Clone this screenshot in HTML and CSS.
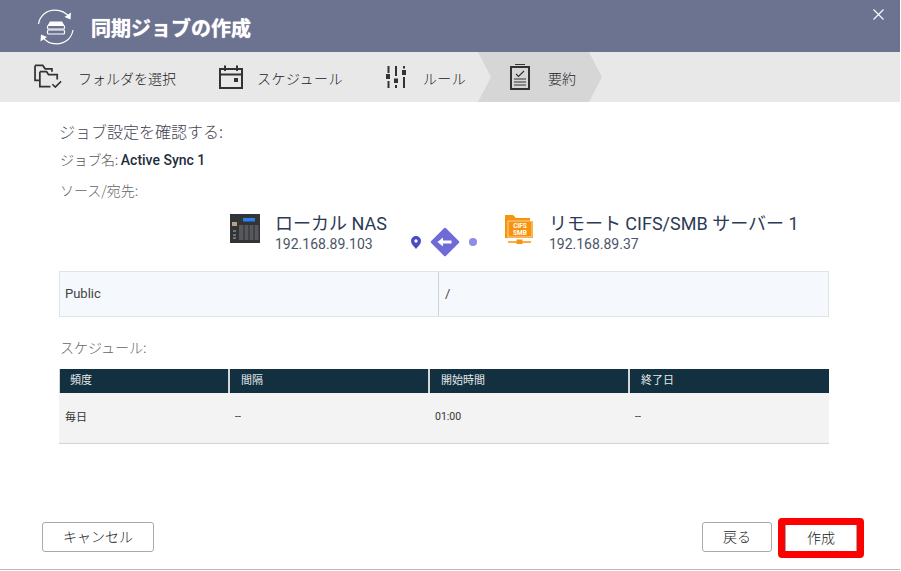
FILE: index.html
```html
<!DOCTYPE html>
<html lang="ja">
<head>
<meta charset="utf-8">
<title>同期ジョブの作成</title>
<link rel="stylesheet" href="styles.css">
</head>
<body>
<div class="dialog">
  <header class="head">
    <svg class="head-icon" width="40" height="40" viewBox="0 0 40 40" fill="none" stroke="#fff">
      <path d="M2.500 17C4 8 11 3.200 19 3.200c6 0 11 2.600 14 7" stroke-width="1.200"/>
      <path d="M37 23c-1.500 9-8.500 13.800-16.500 13.800-6 0-11-2.600-14-7" stroke-width="1.200"/>
      <path d="M35 5.500l-.5 7-6-2.500z" fill="#fff" stroke="none"/>
      <path d="M4.500 34.500l.5-7 6 2.500z" fill="#fff" stroke="none"/>
      <path d="M14 14.500h12l2.500 4h-17z" fill="#fff" stroke="none"/>
      <rect x="11.500" y="18.500" width="17" height="3.500" rx="1" fill="#6b7390" stroke-width="1.200"/>
      <rect x="11.500" y="23" width="17" height="4" rx="1" fill="#6b7390" stroke-width="1.200"/>
    </svg>
    <h1 class="head-title">同期ジョブの作成</h1>
    <svg class="head-close" width="11" height="11" viewBox="0 0 11 11" stroke="#fff" stroke-width="1.100"><path d="M.5.5l10 10M10.500.5l-10 10"/></svg>
  </header>

  <nav class="steps">
    <div class="step step-first">
      <svg width="31" height="27" viewBox="0 0 32 28" fill="none" stroke="#333" stroke-width="1.800">
        <path d="M1 1.500h8l2.500 3.500h7v3M1 1.500V17h5"/>
        <path d="M6 8h7l2 3h9v5M6 8v15.500h11"/>
        <path d="M19 21l3 3 6-6" stroke-width="1.600"/>
      </svg>
      <span>フォルダを選択</span>
    </div>
    <div class="step step-sched">
      <svg width="24" height="24" viewBox="0 0 24 24" fill="none" stroke="#333" stroke-width="2">
        <path d="M1 4h22v19H1zM1 9.500h22M6 .5V6M18 .5V6"/>
        <rect x="15" y="13" width="4" height="4" fill="#333" stroke="none"/>
      </svg>
      <span>スケジュール</span>
    </div>
    <div class="step step-rule">
      <svg width="20" height="22" viewBox="0 0 20 22" fill="#333">
        <rect x="1.500" y="0" width="2" height="7"/><rect x="0" y="8" width="4" height="5"/><rect x="1.500" y="15" width="2" height="7"/>
        <rect x="9" y="0" width="2" height="10"/><rect x="8" y="12.500" width="4" height="4.500"/><rect x="9" y="19" width="2" height="3"/>
        <rect x="17" y="0" width="2" height="2.500"/><rect x="16" y="4" width="4" height="5"/><rect x="17" y="11" width="2" height="11"/>
      </svg>
      <span>ルール</span>
    </div>
    <div class="step step-active">
      <svg width="20" height="26" viewBox="0 0 20 26" fill="none" stroke="#333">
        <path d="M5 .5h10" stroke-width="1"/>
        <rect x="1" y="3" width="18" height="22" stroke-width="2"/>
        <path d="M6 10l2.500 2.500L14 7" stroke-width="1.200"/>
        <path d="M4 15h12M4 18h12M4 21h12" stroke-width="1"/>
      </svg>
      <span>要約</span>
    </div>
  </nav>

  <main class="body">
    <h2 class="confirm">ジョブ設定を確認する:</h2>
    <p class="job">ジョブ名: <b>Active Sync 1</b></p>
    <p class="label label-source">ソース/宛先:</p>

    <div class="route">
      <div class="end end-local">
        <svg width="30" height="30" viewBox="0 0 30 30">
          <rect width="30" height="29" fill="#333438"/>
          <rect x="13" y="4" width="12" height="3.500" fill="#2f80ed"/>
          <rect x="2" y="8" width="5" height="4" fill="#b9a283"/>
          <rect x="9" y="11" width="19.500" height="15" fill="#57585c"/>
          <path d="M14 11v15M19 11v15M24 11v15" stroke="#2b2c30"/>
          <path d="M3 17h3M3 21h3M3 24h3" stroke="#888" stroke-width="1.500"/>
        </svg>
        <div class="end-text"><div class="end-name">ローカル NAS</div><div class="end-ip">192.168.89.103</div></div>
      </div>
      <div class="link">
        <svg width="10" height="13" viewBox="0 0 10 13"><path fill-rule="evenodd" d="M5 0a5 5 0 0 1 5 5c0 3-3 5.500-5 8-2-2.500-5-5-5-8a5 5 0 0 1 5-5zm0 3.300a1.700 1.700 0 1 0 0 3.400 1.700 1.700 0 0 0 0-3.400z" fill="#4a4bc0"/></svg>
        <svg width="30" height="30" viewBox="0 0 30 30"><rect x="4.500" y="4.500" width="21" height="21" rx="1.500" transform="rotate(45 15 15)" fill="#6e6bd6"/><path d="M7.500 15l5.500-4.500v3h8.500v3H13v3z" fill="#fff"/></svg>
        <svg width="8" height="8" viewBox="0 0 8 8"><circle cx="4" cy="4" r="4" fill="#8f8ce6"/></svg>
      </div>
      <div class="end end-remote">
        <svg width="29" height="30" viewBox="0 0 29 30">
          <path d="M0 1h8l3 3h14v3h3v17H0z" fill="#f7930e"/>
          <rect x="3" y="7" width="24" height="16" fill="#f7930e" stroke="#fff" stroke-width=".6"/>
          <text x="15" y="13.500" class="cifs">CIFS</text>
          <text x="15" y="20.500" class="cifs">SMB</text>
          <path d="M3 28h23" stroke="#f7930e" stroke-width="1.500"/>
          <rect x="11.500" y="25.500" width="6" height="4.500" fill="#f7930e"/>
        </svg>
        <div class="end-text"><div class="end-name">リモート CIFS/SMB サーバー 1</div><div class="end-ip">192.168.89.37</div></div>
      </div>
    </div>

    <div class="paths">
      <div class="path-cell path-left">Public</div>
      <div class="path-cell path-right">/</div>
    </div>

    <p class="label label-schedule">スケジュール:</p>

    <table class="sched">
      <thead>
        <tr><th>頻度</th><th>間隔</th><th>開始時間</th><th>終了日</th></tr>
      </thead>
      <tbody>
        <tr><td>毎日</td><td>--</td><td>01:00</td><td>--</td></tr>
      </tbody>
    </table>
  </main>

  <footer class="foot">
    <button class="btn btn-cancel">キャンセル</button>
    <div class="foot-right">
      <button class="btn btn-back">戻る</button>
      <div class="mark"><button class="btn btn-create">作成</button></div>
    </div>
  </footer>
</div>
</body>
</html>
```

FILE: styles.css
```css
* { box-sizing: border-box; }
html, body { margin: 0; padding: 0; background: #fff; }
body {
  width: 901px;
  height: 571px;
  overflow: hidden;
  font-family: Roboto, "Noto Sans CJK JP", sans-serif;
  color: #333;
}
.dialog {
  width: 900px;
  height: 570px;
  display: flex;
  flex-direction: column;
  border-bottom: 1px solid #b9b9b9;
}
.head {
  height: 52px;
  flex: none;
  background: #6b7390;
  display: flex;
  align-items: center;
  padding-left: 36px;
  position: relative;
}
.head-icon { margin-top: 2px; }
.head-title {
  margin: 2px 0 0 15px;
  font: 700 20px "Noto Sans CJK JP", sans-serif;
  color: #fff;
  text-shadow: 0 0 1px #fff;
}
.head-close { position: absolute; left: 873px; top: 9px; }

.steps {
  height: 50px;
  flex: none;
  background: #e8e8e8;
  display: flex;
  align-items: center;
  font: 300 14px "Noto Sans CJK JP", sans-serif;
  color: #222;
}
.step { display: flex; align-items: center; height: 50px; }
.step span { padding-top: 2px; }
.step-first { margin-left: 34px; }
.step-first span { margin-left: 13px; }
.step-sched { margin-left: 43px; }
.step-sched span { margin-left: 14px; letter-spacing: .5px; }
.step-rule { margin-left: 43px; }
.step-rule span { margin-left: 17px; letter-spacing: .3px; }
.step-active {
  margin-left: 12px;
  width: 124px;
  padding-left: 32px;
  background: #d6d6d6;
  clip-path: polygon(0 0, 111px 0, 124px 25px, 111px 50px, 0 50px, 13px 25px);
}
.step-active span { margin-left: 18px; }

.body {
  flex: 1;
  padding: 0 71px 0 59px;
}
.confirm {
  margin: 20px 0 0;
  font: 300 16px/18px "Noto Sans CJK JP", sans-serif;
  color: #445;
}
.job {
  margin: 10px 0 0 1px;
  font: 300 14px/18px "Noto Sans CJK JP", sans-serif;
  letter-spacing: -.3px;
  color: #555;
}
.job b { font: 500 14px/18px Roboto, sans-serif; letter-spacing: 0; color: #1f2d3d; }
.label {
  margin: 0 0 0 1px;
  font: 300 14px/18px "Noto Sans CJK JP", sans-serif;
  color: #666;
}
.label-source { margin-top: 12px; }

.route {
  height: 63px;
  margin-top: 9px;
  display: flex;
  align-items: flex-start;
  padding-left: 171px;
}
.end { display: flex; align-items: flex-start; }
.end svg { margin-top: 6px; flex: none; }
.end-text { margin-left: 15px; padding-top: 5px; }
.end-name {
  font: 400 18px/22px Roboto, "Noto Sans CJK JP", sans-serif;
  color: #2c3a55;
}
.end-ip {
  font: 400 14px/18px Roboto, sans-serif;
  color: #4a5568;
}
.link {
  display: flex;
  align-items: center;
  margin: 19px 0 0 24px;
  height: 30px;
}
.link svg:nth-child(2) { margin-left: 9px; }
.link svg:nth-child(3) { margin-left: 9px; }
.end-remote { margin-left: 28px; }
.cifs {
  font: 700 6.500px Roboto, sans-serif;
  fill: #fff;
  text-anchor: middle;
}

.paths {
  display: grid;
  grid-template-columns: 379px 391px;
  width: 770px;
  height: 46px;
  background: #f5f8fd;
  border: 1px solid #dfe3e8;
  font: 400 13px Roboto, sans-serif;
  color: #444;
}
.path-cell { display: flex; align-items: center; padding: 0 0 2px 5px; }
.path-left { border-right: 1px solid #cfd3d8; }
.path-right { padding-left: 6px; }

.label-schedule { margin-top: 21px; }

.sched {
  width: 770px;
  margin-top: 13px;
  border-collapse: separate;
  border-spacing: 0;
  table-layout: fixed;
}
.sched th {
  width: 200px;
  height: 24px;
  padding: 0 0 4px 11px;
  background: #12303f;
  color: #e4e8ea;
  border-left: 2px solid #d6d6d6;
  font: 400 11px "Noto Sans CJK JP", sans-serif;
  text-align: left;
}
.sched th:first-child { width: 169px; padding-left: 10px; border-left: 1px solid #d6d6d6; }
.sched th:last-child { width: 201px; }
.sched td {
  height: 51px;
  padding: 0 0 4px 7px;
  background: #f3f3f3;
  border-bottom: 1px solid #d4d4d4;
  font: 400 10.500px Roboto, "Noto Sans CJK JP", sans-serif;
  color: #333;
}
.sched td:first-child { padding-left: 6px; font-size: 11px; }
.foot {
  height: 51px;
  flex: none;
  display: flex;
  justify-content: space-between;
  align-items: flex-start;
  padding: 0 36px 0 42px;
}
.foot-right { display: flex; align-items: flex-start; }
.btn {
  height: 30px;
  background: #fff;
  border: 1px solid #a9a9a9;
  border-radius: 3px;
  font: 300 14px "Noto Sans CJK JP", sans-serif;
  color: #222;
  padding: 0 0 3px;
}
.btn-cancel { width: 112px; margin-top: 4px; }
.btn-back { width: 70px; margin-top: 4px; }
.mark {
  width: 86px;
  height: 40px;
  margin-left: 6px;
  border: 7px solid #f00;
  border-radius: 4px;
  background: #fff;
}
.btn-create {
  display: block;
  width: 72px;
  height: 26px;
  border-width: 0 1px;
  border-radius: 0;
}
```
